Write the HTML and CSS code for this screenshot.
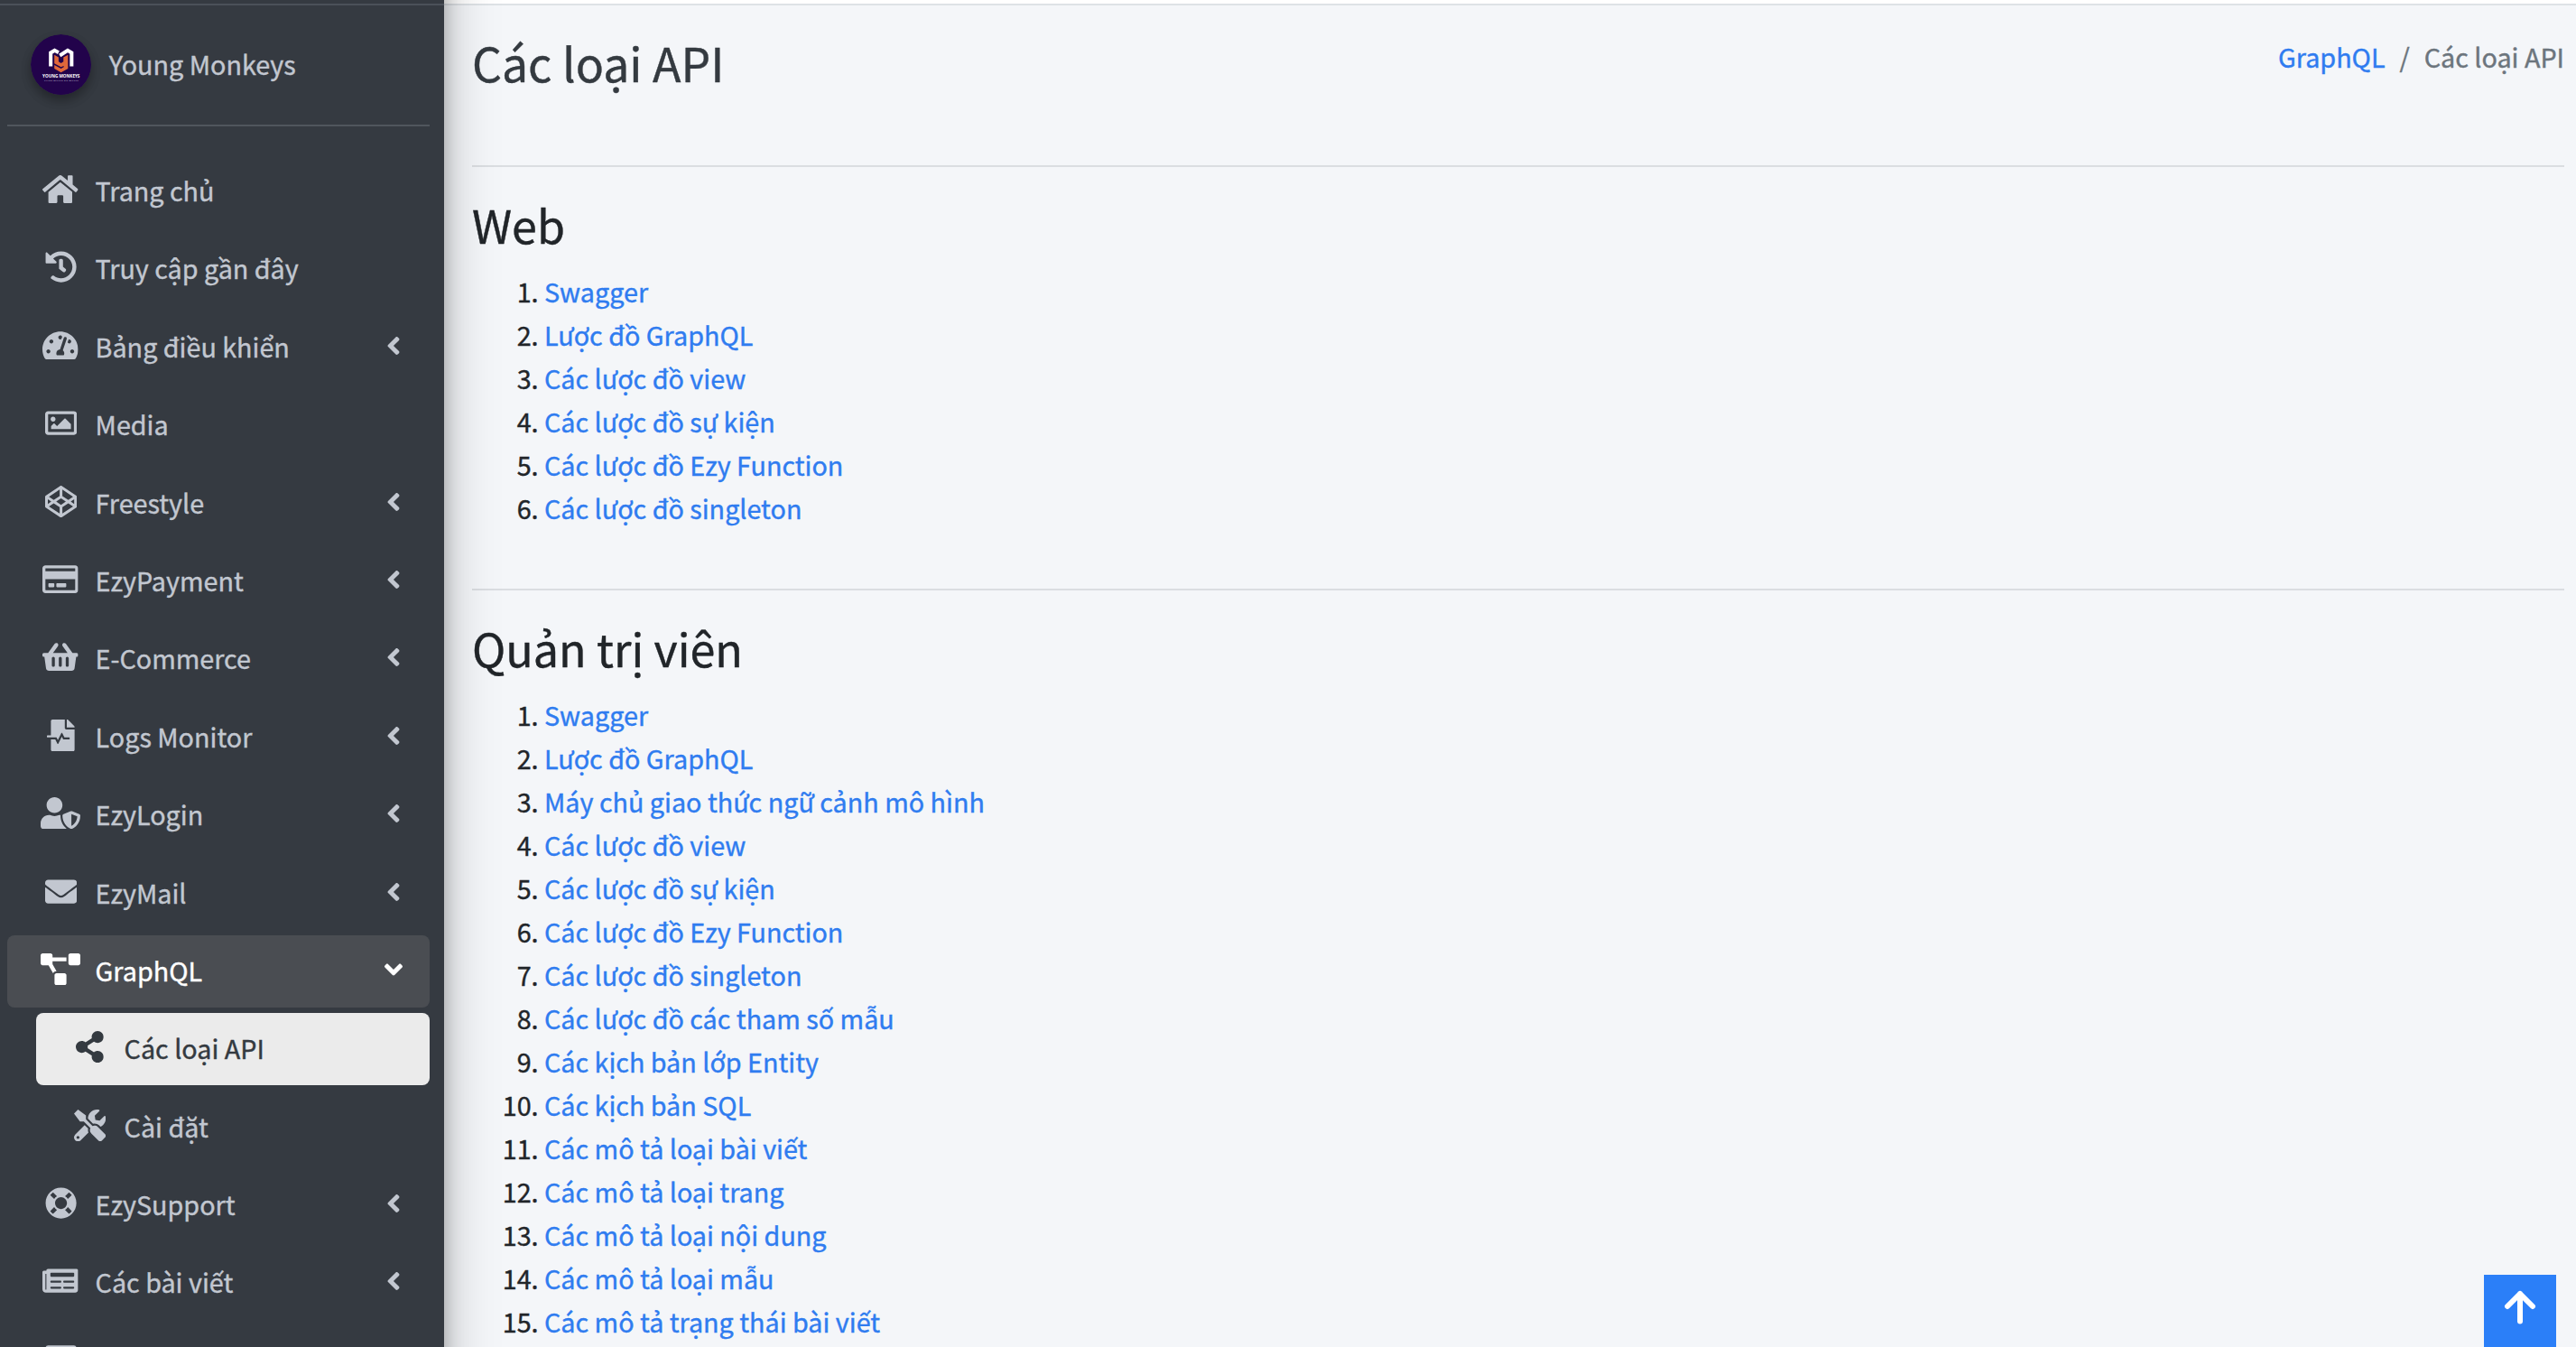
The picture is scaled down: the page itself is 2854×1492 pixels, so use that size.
FILE: index.html
```html
<!DOCTYPE html>
<html lang="vi">
<head>
    <meta charset="UTF-8">
    <meta name="viewport" content="width=device-width, initial-scale=1.0">
    <title>Các loại API</title>
    <link rel="stylesheet" href="styles.css">
</head>
<body>
    <!-- icons -->
    <svg class="sprite">
        <symbol id="home" viewBox="0 0 576 512"><path d="M280.37 148.26L96 300.11V464a16 16 0 0 0 16 16l112.06-.29a16 16 0 0 0 15.92-16V368a16 16 0 0 1 16-16h64a16 16 0 0 1 16 16v95.64a16 16 0 0 0 16 16.05L464 480a16 16 0 0 0 16-16V300L295.67 148.26a12.19 12.19 0 0 0-15.3 0zM571.6 251.47L488 182.56V44.05a12 12 0 0 0-12-12h-56a12 12 0 0 0-12 12v72.61L318.47 43a48 48 0 0 0-61 0L4.34 251.47a12 12 0 0 0-1.6 16.9l25.5 31A12 12 0 0 0 45.15 301l235.22-193.74a12.19 12.19 0 0 1 15.3 0L530.9 301a12 12 0 0 0 16.9-1.6l25.5-31a12 12 0 0 0-1.7-16.93z"/></symbol>
        <symbol id="history" viewBox="0 0 512 512"><path d="M504 255.531c.253 136.64-111.18 248.372-247.82 248.468-59.015.042-113.223-20.53-155.822-54.911-11.077-8.94-11.905-25.541-1.839-35.607l11.267-11.267c8.609-8.609 22.353-9.551 31.891-1.984C173.062 425.135 212.781 440 256 440c101.705 0 184-82.311 184-184 0-101.705-82.311-184-184-184-48.814 0-93.149 18.969-126.068 49.932l50.754 50.754c10.08 10.08 2.941 27.314-11.313 27.314H24c-8.837 0-16-7.163-16-16V38.627c0-14.254 17.234-21.393 27.314-11.314l49.372 49.372C129.209 34.136 189.552 8 256 8c136.81 0 247.747 110.78 248 247.531zm-180.912 78.784l9.823-12.63c8.138-10.463 6.253-25.542-4.21-33.679L288 256.349V152c0-13.255-10.745-24-24-24h-16c-13.255 0-24 10.745-24 24v135.651l65.409 50.874c10.463 8.137 25.541 6.253 33.679-4.21z"/></symbol>
        <symbol id="gauge" viewBox="0 0 576 512"><path d="M288 32C128.94 32 0 160.94 0 320c0 52.8 14.25 102.26 39.06 144.8 5.61 9.62 16.3 15.2 27.44 15.2h443c11.14 0 21.83-5.58 27.44-15.2C561.75 422.26 576 372.8 576 320c0-159.06-128.94-288-288-288zm0 64c14.71 0 26.58 10.13 30.32 23.65-1.11 2.26-2.64 4.23-3.45 6.67l-9.22 27.67c-5.13 3.49-10.97 6.01-17.64 6.01-17.67 0-32-14.33-32-32S270.33 96 288 96zM96 384c-17.67 0-32-14.33-32-32s14.33-32 32-32 32 14.33 32 32-14.33 32-32 32zm48-160c-17.67 0-32-14.33-32-32s14.33-32 32-32 32 14.33 32 32-14.33 32-32 32zm246.77-72.41l-61.33 184C343.13 347.33 352 364.54 352 384c0 11.72-3.38 22.55-8.88 32H232.88c-5.5-9.45-8.88-20.28-8.88-32 0-33.94 26.5-61.43 59.9-63.59l61.34-184.01c4.17-12.56 17.73-19.45 30.36-15.17 12.57 4.19 19.35 17.79 15.17 30.36zm14.66 57.2l15.52-46.55c3.47-1.29 7.13-2.23 11.05-2.23 17.67 0 32 14.33 32 32s-14.33 32-32 32c-11.38-.01-20.89-6.28-26.57-15.22zM480 384c-17.67 0-32-14.33-32-32s14.33-32 32-32 32 14.33 32 32-14.33 32-32 32z"/></symbol>
        <symbol id="image" viewBox="0 0 512 512"><path d="M464 64H48C21.49 64 0 85.49 0 112v288c0 26.51 21.49 48 48 48h416c26.51 0 48-21.49 48-48V112c0-26.51-21.49-48-48-48zm-6 336H54a6 6 0 0 1-6-6V118a6 6 0 0 1 6-6h404a6 6 0 0 1 6 6v276a6 6 0 0 1-6 6zM128 152c-22.091 0-40 17.909-40 40s17.909 40 40 40 40-17.909 40-40-17.909-40-40-40zM96 352h320v-80l-87.515-87.515c-4.686-4.686-12.284-4.686-16.971 0L192 304l-39.515-39.515c-4.686-4.686-12.284-4.686-16.971 0L96 304v48z"/></symbol>
        <symbol id="codepen" viewBox="0 0 512 512"><path d="M502.285 159.704l-234-156c-7.987-4.915-16.511-4.96-24.571 0l-234 156C3.714 163.703 0 170.847 0 177.989v155.999c0 7.143 3.714 14.286 9.715 18.286l234 156.022c7.987 4.915 16.511 4.96 24.571 0l234-156.022c6-3.999 9.715-11.143 9.715-18.286V177.989c-.001-7.142-3.715-14.286-9.716-18.285zM278 63.131l172.286 114.858-76.857 51.429L278 165.703V63.131zm-44 0v102.572l-95.429 63.715-76.857-51.429L234 63.131zM44 219.132l55.143 36.857L44 292.847v-73.715zm190 229.715L61.714 333.989l76.857-51.429L234 346.275v102.572zm22-140.858l-77.715-52 77.715-52 77.715 52-77.715 52zm22 140.858V346.275l95.429-63.715 76.857 51.429L278 448.847zm190-156l-55.143-36.858L468 219.132v73.715z"/></symbol>
        <symbol id="card" viewBox="0 0 576 512"><path d="M527.9 32H48.1C21.5 32 0 53.5 0 80v352c0 26.5 21.5 48 48.1 48h479.8c26.6 0 48.1-21.5 48.1-48V80c0-26.5-21.5-48-48.1-48zM54.1 80h467.8c3.3 0 6 2.7 6 6v42H48.1V86c0-3.3 2.7-6 6-6zm467.8 352H54.1c-3.3 0-6-2.7-6-6V256h479.8v170c0 3.3-2.7 6-6 6zM192 332v40c0 6.6-5.4 12-12 12h-72c-6.6 0-12-5.4-12-12v-40c0-6.6 5.4-12 12-12h72c6.6 0 12 5.4 12 12zm192 0v40c0 6.6-5.4 12-12 12H236c-6.6 0-12-5.4-12-12v-40c0-6.6 5.4-12 12-12h136c6.6 0 12 5.4 12 12z"/></symbol>
        <symbol id="basket" viewBox="0 0 576 512"><path d="M576 216v16c0 13.255-10.745 24-24 24h-8l-26.113 182.788C514.509 462.435 494.257 480 470.37 480H105.63c-23.887 0-44.139-17.565-47.518-41.212L32 256h-8c-13.255 0-24-10.745-24-24v-16c0-13.255 10.745-24 24-24h67.341l106.78-146.821c10.395-14.292 30.407-17.453 44.701-7.058 14.293 10.395 17.453 30.408 7.058 44.701L170.477 192h235.046L326.12 82.821c-10.395-14.292-7.234-34.306 7.059-44.701 14.291-10.395 34.306-7.235 44.701 7.058L484.659 192H552c13.255 0 24 10.745 24 24zM312 392V280c0-13.255-10.745-24-24-24s-24 10.745-24 24v112c0 13.255 10.745 24 24 24s24-10.745 24-24zm112 0V280c0-13.255-10.745-24-24-24s-24 10.745-24 24v112c0 13.255 10.745 24 24 24s24-10.745 24-24zm-224 0V280c0-13.255-10.745-24-24-24s-24 10.745-24 24v112c0 13.255 10.745 24 24 24s24-10.745 24-24z"/></symbol>
        <symbol id="logs" viewBox="0 0 448 512"><path d="M288 136V0H88C74.7 0 64 10.7 64 24v232H8c-4.4 0-8 3.6-8 8v16c0 4.4 3.6 8 8 8h140.9c3 0 5.8 1.7 7.2 4.4l19.9 39.8 56.8-113.7c2.9-5.9 11.4-5.9 14.3 0l34.7 69.5H352c8.8 0 16 7.2 16 16s-7.2 16-16 16h-89.9L240 275.8l-56.8 113.7c-2.9 5.9-11.4 5.9-14.3 0L134.1 320H64v168c0 13.3 10.7 24 24 24h336c13.3 0 24-10.7 24-24V160H312c-13.2 0-24-10.8-24-24zm153-31L343.1 7c-4.5-4.5-10.6-7-17-7H320v128h128v-6.1c0-6.3-2.5-12.4-7-16.9z"/></symbol>
        <symbol id="user-shield" viewBox="0 0 640 512"><path d="M622.3 271.1l-115.2-45c-4.1-1.6-12.6-3.7-22.2 0l-115.2 45c-10.7 4.2-17.7 14-17.7 24.9 0 111.6 68.7 188.8 132.9 213.9 9.6 3.7 18 1.6 22.2 0C558.4 489.9 640 420.5 640 296c0-10.9-7-20.7-17.7-24.9zM496 462.4V273.3l95.5 37.3c-5.6 87.1-60.9 135.4-95.5 151.8zM224 256c70.7 0 128-57.3 128-128S294.7 0 224 0 96 57.3 96 128s57.3 128 128 128zm96 40c0-2.5.8-4.8 1.1-7.2-2.5-.1-4.9-.8-7.5-.8h-16.7c-22.2 10.2-46.9 16-72.9 16s-50.6-5.8-72.9-16h-16.7C60.2 288 0 348.2 0 422.4V464c0 26.5 21.5 48 48 48h352c6.8 0 13.3-1.5 19.2-4-54-42.9-99.2-116.7-99.2-212z"/></symbol>
        <symbol id="envelope" viewBox="0 0 512 512"><path d="M502.3 190.8c3.9-3.1 9.7-.2 9.7 4.7V400c0 26.5-21.5 48-48 48H48c-26.5 0-48-21.5-48-48V195.6c0-5 5.7-7.8 9.7-4.7 22.4 17.4 52.1 39.5 154.1 113.6 21.1 15.4 56.7 47.8 92.2 47.6 35.7.3 72-32.8 92.3-47.6 102-74.1 131.6-96.3 154-113.7zM256 320c23.2.4 56.6-29.2 73.4-41.4 132.7-96.3 142.8-104.7 173.4-128.7 5.8-4.5 9.2-11.5 9.2-18.9v-19c0-26.5-21.5-48-48-48H48c-26.5 0-48 21.5-48 48v19c0 7.4 3.4 14.3 9.2 18.9 30.6 23.9 40.7 32.4 173.4 128.7 16.8 12.2 50.2 41.8 73.4 41.4z"/></symbol>
        <symbol id="diagram" viewBox="0 0 640 512"><path d="M384 320H256c-17.67 0-32 14.33-32 32v128c0 17.67 14.33 32 32 32h128c17.67 0 32-14.33 32-32V352c0-17.67-14.33-32-32-32zM192 32c0-17.67-14.33-32-32-32H32C14.33 0 0 14.33 0 32v128c0 17.67 14.33 32 32 32h95.72l73.16 128.04C211.98 300.98 232.4 288 256 288h.28L192 175.51V128h224V64H192V32zM608 0H480c-17.67 0-32 14.33-32 32v128c0 17.67 14.33 32 32 32h128c17.67 0 32-14.33 32-32V32c0-17.67-14.33-32-32-32z"/></symbol>
        <symbol id="share" viewBox="0 0 448 512"><path d="M352 320c-22.608 0-43.387 7.819-59.79 20.895l-102.486-64.054a96.551 96.551 0 0 0 0-41.683l102.486-64.054C308.613 184.181 329.392 192 352 192c53.019 0 96-42.981 96-96S405.019 0 352 0s-96 42.981-96 96c0 7.158.79 14.13 2.276 20.841L155.79 180.895C139.387 167.819 118.608 160 96 160c-53.019 0-96 42.981-96 96s42.981 96 96 96c22.608 0 43.387-7.819 59.79-20.895l102.486 64.054A96.301 96.301 0 0 0 256 416c0 53.019 42.981 96 96 96s96-42.981 96-96-42.981-96-96-96z"/></symbol>
        <symbol id="tools" viewBox="0 0 512 512"><path d="M501.1 395.7L384 278.6c-23.1-23.1-57.6-27.6-85.4-13.9L192 158.1V96L64 0 0 64l96 128h62.1l106.6 106.6c-13.6 27.8-9.2 62.3 13.9 85.4l117.1 117.1c14.6 14.6 38.2 14.6 52.7 0l52.7-52.7c14.5-14.6 14.5-38.2 0-52.7zM331.7 225c28.3 0 54.9 11 74.9 31l19.4 19.4c15.8-6.9 30.8-16.5 43.8-29.5 37.1-37.1 49.7-89.3 37.9-136.7-2.2-9-13.5-12.1-20.1-5.5l-74.4 74.4-67.9-11.3L334 98.9l74.4-74.4c6.6-6.6 3.4-17.9-5.7-20.2-47.4-11.7-99.6.9-136.6 37.9-28.5 28.5-41.9 66.1-41.2 103.6l82.1 82.1c8.1-1.9 16.5-2.9 24.7-2.9zm-103.9 82l-56.7-56.7L18.7 402.8c-25 25-25 65.5 0 90.5s65.5 25 90.5 0l123.6-123.6c-7.6-19.9-9.9-41.6-5-62.7zM64 472c-13.2 0-24-10.8-24-24 0-13.3 10.7-24 24-24s24 10.7 24 24c0 13.2-10.7 24-24 24z"/></symbol>
        <symbol id="life-ring" viewBox="0 0 512 512"><path d="M256 8C119.033 8 8 119.033 8 256s111.033 248 248 248 248-111.033 248-248S392.967 8 256 8zm173.696 119.559l-63.399 63.399c-10.987-18.559-26.67-34.252-45.255-45.255l63.399-63.399a218.396 218.396 0 0 1 45.255 45.255zM256 352c-53.019 0-96-42.981-96-96s42.981-96 96-96 96 42.981 96 96-42.981 96-96 96zM127.559 82.304l63.399 63.399c-18.559 10.987-34.252 26.67-45.255 45.255l-63.399-63.399a218.372 218.372 0 0 1 45.255-45.255zM82.304 384.441l63.399-63.399c10.987 18.559 26.67 34.252 45.255 45.255l-63.399 63.399a218.396 218.396 0 0 1-45.255-45.255zm302.137 45.255l-63.399-63.399c18.559-10.987 34.252-26.67 45.255-45.255l63.399 63.399a218.403 218.403 0 0 1-45.255 45.255z"/></symbol>
        <symbol id="newspaper" viewBox="0 0 576 512"><path fill-rule="evenodd" d="M552 64H88c-13.255 0-24 10.745-24 24v8H24c-13.255 0-24 10.745-24 24v272c0 30.928 25.072 56 56 56h472c26.51 0 48-21.49 48-48V88c0-13.255-10.745-24-24-24zM56 400a8 8 0 0 1-8-8V144h16v248a8 8 0 0 1-8 8zM140 128h360q12 0 12 12v40q0 12-12 12H140q-12 0-12-12v-40q0-12 12-12zM140 256h152q12 0 12 12v8q0 12-12 12H140q-12 0-12-12v-8q0-12 12-12zM348 256h152q12 0 12 12v8q0 12-12 12H348q-12 0-12-12v-8q0-12 12-12zM140 352h152q12 0 12 12v8q0 12-12 12H140q-12 0-12-12v-8q0-12 12-12zM348 352h152q12 0 12 12v8q0 12-12 12H348q-12 0-12-12v-8q0-12 12-12z"/></symbol>
        <symbol id="page" viewBox="0 0 512 512"><rect x="8" y="32" width="496" height="448" rx="40"/></symbol>
        <symbol id="angle" viewBox="0 0 256 512"><path d="M31.7 239l136-136c9.4-9.4 24.6-9.4 33.9 0l22.6 22.6c9.4 9.4 9.4 24.6 0 33.9L127.9 256l96.4 96.4c9.4 9.4 9.4 24.6 0 33.9L201.7 409c-9.4 9.4-24.6 9.4-33.9 0l-136-136c-9.5-9.4-9.5-24.6-.1-34z"/></symbol>
    </svg>

    <div class="wrapper">
        <aside class="sidebar">
            <div class="brand"></div>
            <div class="user-panel">
                <svg class="logo" viewBox="0 0 200 200">
                    <circle cx="100" cy="100" r="100" fill="#22034b"/>
                    <path d="M66 106V61l13-8 13 7" fill="none" stroke="#fff" stroke-width="12"/>
                    <path d="M135 106V61l-13-8-26 17" fill="none" stroke="#fff" stroke-width="12"/>
                    <path d="M78 68l14 8v14l8 5 8-5V76l15-8v45l-23 13-22-13v-12l22 12 9-5v-4l-9 4-22-12z" fill="#e0673a"/>
                    <text x="39" y="144" textLength="123" lengthAdjust="spacingAndGlyphs" class="logo-name">YOUNG MONKEYS</text>
                    <text x="45" y="155" textLength="112" class="logo-slogan">THINK BETTER DO BETTER</text>
                </svg>
                <a href="#" class="user-name">Young Monkeys</a>
            </div>
            <ul class="nav">
                <li><a href="#" class="nav-link"><span class="icon"><svg width="39.6"><use href="#home"/></svg></span><span class="label">Trang chủ</span></a></li>
                <li><a href="#" class="nav-link"><span class="icon"><svg width="35.2"><use href="#history"/></svg></span><span class="label">Truy cập gần đây</span></a></li>
                <li><a href="#" class="nav-link"><span class="icon"><svg width="39.6"><use href="#gauge"/></svg></span><span class="label">Bảng điều khiển</span><svg class="angle"><use href="#angle"/></svg></a></li>
                <li><a href="#" class="nav-link"><span class="icon"><svg width="35.2"><use href="#image"/></svg></span><span class="label">Media</span></a></li>
                <li><a href="#" class="nav-link"><span class="icon"><svg width="35.2"><use href="#codepen"/></svg></span><span class="label">Freestyle</span><svg class="angle"><use href="#angle"/></svg></a></li>
                <li><a href="#" class="nav-link"><span class="icon"><svg width="39.6"><use href="#card"/></svg></span><span class="label">EzyPayment</span><svg class="angle"><use href="#angle"/></svg></a></li>
                <li><a href="#" class="nav-link"><span class="icon"><svg width="39.6"><use href="#basket"/></svg></span><span class="label">E-Commerce</span><svg class="angle"><use href="#angle"/></svg></a></li>
                <li><a href="#" class="nav-link"><span class="icon"><svg width="30.8"><use href="#logs"/></svg></span><span class="label">Logs Monitor</span><svg class="angle"><use href="#angle"/></svg></a></li>
                <li><a href="#" class="nav-link"><span class="icon"><svg width="44"><use href="#user-shield"/></svg></span><span class="label">EzyLogin</span><svg class="angle"><use href="#angle"/></svg></a></li>
                <li><a href="#" class="nav-link"><span class="icon"><svg width="35.2"><use href="#envelope"/></svg></span><span class="label">EzyMail</span><svg class="angle"><use href="#angle"/></svg></a></li>
                <li>
                    <a href="#" class="nav-link open"><span class="icon"><svg width="44"><use href="#diagram"/></svg></span><span class="label">GraphQL</span><svg class="angle"><use href="#angle"/></svg></a>
                    <ul class="nav-tree">
                        <li><a href="#" class="nav-link active"><span class="icon"><svg width="30.8"><use href="#share"/></svg></span><span class="label">Các loại API</span></a></li>
                        <li><a href="#" class="nav-link"><span class="icon"><svg width="35.2"><use href="#tools"/></svg></span><span class="label">Cài đặt</span></a></li>
                    </ul>
                </li>
                <li><a href="#" class="nav-link"><span class="icon"><svg width="35.2"><use href="#life-ring"/></svg></span><span class="label">EzySupport</span><svg class="angle"><use href="#angle"/></svg></a></li>
                <li><a href="#" class="nav-link"><span class="icon"><svg width="39.6"><use href="#newspaper"/></svg></span><span class="label">Các bài viết</span><svg class="angle"><use href="#angle"/></svg></a></li>
                <li><a href="#" class="nav-link"><span class="icon"><svg width="35.2"><use href="#page"/></svg></span></a></li>
            </ul>
        </aside>

        <main class="content">
            <div class="navbar"></div>
            <div class="content-header">
                <h1>Các loại API</h1>
                <ol class="breadcrumb">
                    <li><a href="#">GraphQL</a></li>
                    <li>Các loại API</li>
                </ol>
            </div>
            <section class="section">
                <h3>Web</h3>
                <ol class="list">
                    <li><a href="#">Swagger</a></li>
                    <li><a href="#">Lược đồ GraphQL</a></li>
                    <li><a href="#">Các lược đồ view</a></li>
                    <li><a href="#">Các lược đồ sự kiện</a></li>
                    <li><a href="#">Các lược đồ Ezy Function</a></li>
                    <li><a href="#">Các lược đồ singleton</a></li>
                </ol>
            </section>
            <section class="section">
                <h3>Quản trị viên</h3>
                <ol class="list">
                    <li><a href="#">Swagger</a></li>
                    <li><a href="#">Lược đồ GraphQL</a></li>
                    <li><a href="#">Máy chủ giao thức ngữ cảnh mô hình</a></li>
                    <li><a href="#">Các lược đồ view</a></li>
                    <li><a href="#">Các lược đồ sự kiện</a></li>
                    <li><a href="#">Các lược đồ Ezy Function</a></li>
                    <li><a href="#">Các lược đồ singleton</a></li>
                    <li><a href="#">Các lược đồ các tham số mẫu</a></li>
                    <li><a href="#">Các kịch bản lớp Entity</a></li>
                    <li><a href="#">Các kịch bản SQL</a></li>
                    <li><a href="#">Các mô tả loại bài viết</a></li>
                    <li><a href="#">Các mô tả loại trang</a></li>
                    <li><a href="#">Các mô tả loại nội dung</a></li>
                    <li><a href="#">Các mô tả loại mẫu</a></li>
                    <li><a href="#">Các mô tả trạng thái bài viết</a></li>
                </ol>
            </section>
        </main>
    </div>

    <a href="#" class="back-to-top">
        <svg viewBox="0 0 36 38"><path d="M18 4v30.500M4 18L18 4l14 14" fill="none" stroke="#fff" stroke-width="6" stroke-linecap="round" stroke-linejoin="round"/></svg>
    </a>
</body>
</html>
```

FILE: styles.css
```css
* {
    margin: 0;
    padding: 0;
    box-sizing: border-box;
}
html, body {
    height: 100%;
    overflow: hidden;
}
body {
    font-family: "Noto Sans CJK SC", "Noto Sans", sans-serif;
    font-size: 28.72px;
    line-height: 48px;
    color: #212529;
    background: #f4f6f9;
    -webkit-text-stroke: .4px;
}
a {
    color: #2f7cf0;
    text-decoration: none;
}
ul {
    list-style: none;
}
.sprite {
    display: none;
}
.wrapper {
    display: flex;
    height: 100%;
    overflow: hidden;
}

/* sidebar */
.sidebar {
    position: relative;
    z-index: 2;
    flex: none;
    width: 492px;
    height: 1800px;
    margin-top: -150px;
    padding-top: 150px;
    background: #353a41;
    box-shadow: 0 28px 56px rgba(0, 0, 0, .25), 0 20px 20px rgba(0, 0, 0, .22);
}
.brand {
    height: 6px;
    border-bottom: 2px solid #4b5159;
}
.user-panel {
    display: flex;
    height: 102px;
    margin: 32px 16px 32px 8px;
    padding-left: 25.6px;
    border-bottom: 2px solid #50565d;
}
.logo {
    width: 67.2px;
    height: 67.2px;
    border-radius: 50%;
    box-shadow: 0 6px 12px rgba(0, 0, 0, .2), 0 6px 12px rgba(0, 0, 0, .16);
}
.logo text {
    -webkit-text-stroke: 0;
}
.logo-name {
    font: bold 16px "Open Sans", sans-serif;
    fill: #fff;
}
.logo-slogan {
    font: bold 7px "Open Sans", sans-serif;
    fill: #a79bb8;
}
.user-name {
    padding: 9px 0 0 20px;
    color: #c2c7d0;
}
.nav {
    padding: 0 16px 0 8px;
}
.nav-tree {
    padding-left: 32px;
}
.nav-link {
    display: flex;
    height: 80px;
    margin-bottom: 6.4px;
    padding: 16px 32px;
    border-radius: 8px;
    color: #c2c7d0;
}
.nav-link svg {
    flex: none;
    fill: currentColor;
}
.nav-link.open {
    color: #fff;
    background: #4a4d52;
}
.nav-link.active {
    color: #343a40;
    background: #ebebeb;
}
.icon {
    display: flex;
    justify-content: center;
    width: 51.2px;
    margin: 4px 12.8px 0 1.6px;
}
.icon svg {
    height: 35.2px;
}
.label {
    flex: 1;
    margin-top: -1px;
}
.angle {
    width: 16px;
    height: 32px;
    margin-top: 6px;
}
.open .angle {
    transform: rotate(-90deg);
}

/* content */
.content {
    flex: 1;
}
.navbar {
    height: 6px;
    background: #fff;
    border-bottom: 2px solid #dee2e6;
}
.content-header {
    display: flex;
    justify-content: space-between;
    height: 177px;
    padding: 30px 13px 0 31px;
}
h1 {
    margin-top: -2px;
    font-size: 51.7px;
    font-weight: 400;
    line-height: 69px;
    color: #343a40;
}
.breadcrumb {
    display: flex;
    margin-top: 3px;
    list-style: none;
    color: #6c757d;
}
.breadcrumb li + li::before {
    content: "/";
    padding: 0 16px;
}
.section {
    margin: 0 13px 0 31px;
    padding-top: 32px;
    border-top: 2px solid #dadde1;
}
h3 {
    margin: -2px 0 17px;
    font-size: 50.25px;
    font-weight: 400;
    line-height: 67.2px;
}
.list {
    margin-bottom: 64.8px;
    padding-left: 80px;
}
.back-to-top {
    position: absolute;
    z-index: 3;
    right: 22px;
    bottom: 0;
    display: flex;
    justify-content: center;
    width: 80px;
    height: 80px;
    padding-top: 17px;
    background: #2b7ff8;
}
.back-to-top svg {
    width: 36px;
    height: 38px;
}
```
